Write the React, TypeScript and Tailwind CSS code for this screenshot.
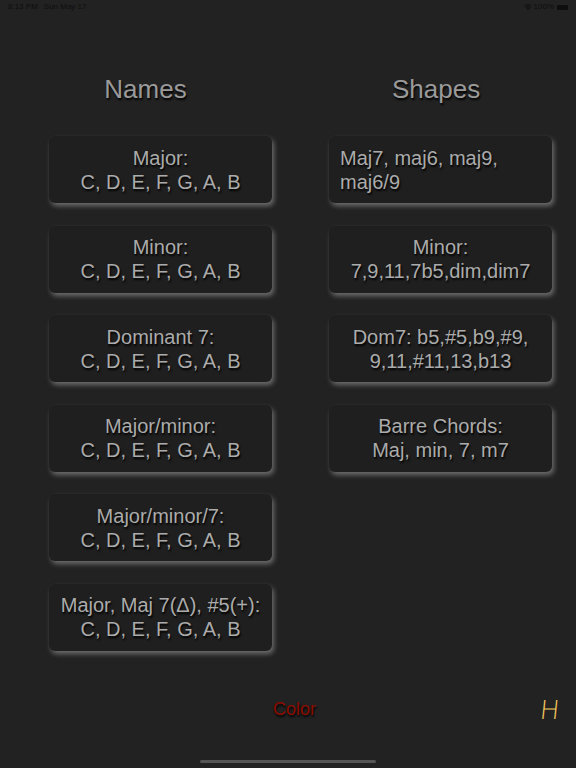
import { Wifi } from "lucide-react"

const names = [
  ["Major:", "C, D, E, F, G, A, B"],
  ["Minor:", "C, D, E, F, G, A, B"],
  ["Dominant 7:", "C, D, E, F, G, A, B"],
  ["Major/minor:", "C, D, E, F, G, A, B"],
  ["Major/minor/7:", "C, D, E, F, G, A, B"],
  ["Major, Maj 7(Δ), #5(+):", "C, D, E, F, G, A, B"],
]

const shapes = [
  { lines: ["Maj7, maj6, maj9,", "maj6/9"], left: true },
  { lines: ["Minor:", "7,9,11,7b5,dim,dim7"] },
  { lines: ["Dom7: b5,#5,b9,#9,", "9,11,#11,13,b13"] },
  { lines: ["Barre Chords:", "Maj, min, 7, m7"] },
]

function ChordButton({ lines, left }: { lines: string[]; left?: boolean }) {
  return (
    <button
      className={`h-[67px] w-[223px] rounded-[6px] bg-[#1f1f1f] shadow-[2px_3px_5px_rgba(170,170,170,0.55)] flex flex-col justify-center text-[20px] leading-[24px] text-[#ababab] [text-shadow:1px_2px_2px_rgba(0,0,0,0.95)] ${
        left ? "items-start pl-[11px]" : "items-center"
      }`}
    >
      {lines.map(l => (
        <span key={l}>{l}</span>
      ))}
    </button>
  )
}

export default function App() {
  return (
    <div className="h-[768px] w-[576px] bg-[#222222] flex flex-col font-['Liberation_Sans',Arial,sans-serif] overflow-hidden">
      {/* status bar */}
      <div className="h-[14px] flex items-center justify-between px-[8px] text-[8px] text-[#0e0e0e]">
        <div className="flex gap-[6px]">
          <span>8:13 PM</span>
          <span>Sun May 17</span>
        </div>
        <div className="flex items-center gap-[2px]">
          <Wifi size={8} strokeWidth={3} />
          <span>100%</span>
          <div className="ml-[1px] h-[5px] w-[11px] rounded-[1px] bg-[#0e0e0e]" />
        </div>
      </div>

      {/* headers */}
      <div className="mt-[60px] flex h-[30px] text-[26px] leading-[30px] text-[#9a9a9a] [text-shadow:1px_2px_2px_rgba(0,0,0,0.95)]">
        <div className="ml-[104px] w-[83px] text-center">Names</div>
        <div className="ml-[205px]">Shapes</div>
      </div>

      {/* buttons */}
      <div className="mt-[32px] flex gap-[57px] pl-[49px]">
        <div className="flex flex-col gap-[22.6px]">
          {names.map(n => (
            <ChordButton key={n[0]} lines={n} />
          ))}
        </div>
        <div className="flex flex-col gap-[22.6px]">
          {shapes.map(s => (
            <ChordButton key={s.lines[0]} lines={s.lines} left={s.left} />
          ))}
        </div>
      </div>

      {/* bottom row */}
      <div className="mt-[46px] flex h-[26px] items-center">
        <span className="ml-[273px] text-[18px] text-[#8a0c00] [text-shadow:1px_2px_2px_rgba(0,0,0,0.95)]">
          Color
        </span>
        <span className="ml-[224px] -skew-x-6 text-[26px] font-extralight leading-[26px] text-[#f2c45c] font-['DejaVu_Sans',sans-serif]">
          H
        </span>
      </div>

      {/* home indicator */}
      <div className="mt-auto mb-[5px] mx-auto h-[3px] w-[176px] rounded-full bg-[#555555]" />
    </div>
  )
}
